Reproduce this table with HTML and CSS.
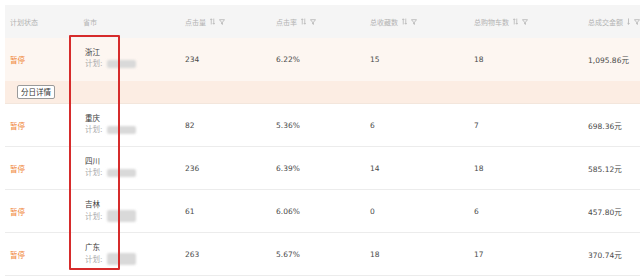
FILE: index.html
```html
<!DOCTYPE html>
<html lang="zh">
<head>
<meta charset="utf-8">
<link rel="stylesheet" href="styles.css">
</head>
<body>
<div class="wrap">
  <div class="table">
    <div class="row head">
      <div class="cell">计划状态</div>
      <div class="cell">省市</div>
      <div class="cell"><span>点击量</span><svg class="sort" width="5" height="7" viewBox="0 0 6 8"><path d="M1.5 7.5V0.8M0.3 2L1.5 0.8 2.7 2M4.5 0.5V7.2M3.3 6L4.5 7.2 5.7 6"/></svg><svg class="filt" width="6" height="6" viewBox="0 0 7 7"><path d="M0.5 0.8H6.5L4 3.8V6.3L3 5.6V3.8Z"/></svg></div>
      <div class="cell"><span>点击率</span><svg class="sort" width="5" height="7" viewBox="0 0 6 8"><path d="M1.5 7.5V0.8M0.3 2L1.5 0.8 2.7 2M4.5 0.5V7.2M3.3 6L4.5 7.2 5.7 6"/></svg><svg class="filt" width="6" height="6" viewBox="0 0 7 7"><path d="M0.5 0.8H6.5L4 3.8V6.3L3 5.6V3.8Z"/></svg></div>
      <div class="cell"><span>总收藏数</span><svg class="sort" width="5" height="7" viewBox="0 0 6 8"><path d="M1.5 7.5V0.8M0.3 2L1.5 0.8 2.7 2M4.5 0.5V7.2M3.3 6L4.5 7.2 5.7 6"/></svg><svg class="filt" width="6" height="6" viewBox="0 0 7 7"><path d="M0.5 0.8H6.5L4 3.8V6.3L3 5.6V3.8Z"/></svg></div>
      <div class="cell"><span>总购物车数</span><svg class="sort" width="5" height="7" viewBox="0 0 6 8"><path d="M1.5 7.5V0.8M0.3 2L1.5 0.8 2.7 2M4.5 0.5V7.2M3.3 6L4.5 7.2 5.7 6"/></svg><svg class="filt" width="6" height="6" viewBox="0 0 7 7"><path d="M0.5 0.8H6.5L4 3.8V6.3L3 5.6V3.8Z"/></svg></div>
      <div class="cell"><span>总成交金额</span><svg class="sort one" width="3" height="7" viewBox="0 0 3 8"><path d="M1.5 0.5V7.2M0.3 6L1.5 7.2 2.7 6"/></svg><svg class="filt" width="6" height="6" viewBox="0 0 7 7"><path d="M0.5 0.8H6.5L4 3.8V6.3L3 5.6V3.8Z"/></svg></div>
    </div>

    <div class="row data active">
      <div class="cell status">暂停</div>
      <div class="cell city"><span class="name">浙江</span><span class="plan">计划:<i class="redact"></i></span></div>
      <div class="cell">234</div>
      <div class="cell">6.22%</div>
      <div class="cell">15</div>
      <div class="cell">18</div>
      <div class="cell">1,095.86元</div>
    </div>
    <div class="subrow">
      <button class="btn">分日详情</button>
    </div>

    <div class="row data">
      <div class="cell status">暂停</div>
      <div class="cell city"><span class="name">重庆</span><span class="plan">计划:<i class="redact"></i></span></div>
      <div class="cell">82</div>
      <div class="cell">5.36%</div>
      <div class="cell">6</div>
      <div class="cell">7</div>
      <div class="cell">698.36元</div>
    </div>
    <div class="row data">
      <div class="cell status">暂停</div>
      <div class="cell city"><span class="name">四川</span><span class="plan">计划:<i class="redact"></i></span></div>
      <div class="cell">236</div>
      <div class="cell">6.39%</div>
      <div class="cell">14</div>
      <div class="cell">18</div>
      <div class="cell">585.12元</div>
    </div>
    <div class="row data">
      <div class="cell status">暂停</div>
      <div class="cell city"><span class="name">吉林</span><span class="plan">计划:<i class="redact big"></i></span></div>
      <div class="cell">61</div>
      <div class="cell">6.06%</div>
      <div class="cell">0</div>
      <div class="cell">6</div>
      <div class="cell">457.80元</div>
    </div>
    <div class="row data">
      <div class="cell status">暂停</div>
      <div class="cell city"><span class="name">广东</span><span class="plan">计划:<i class="redact big"></i></span></div>
      <div class="cell">263</div>
      <div class="cell">5.67%</div>
      <div class="cell">18</div>
      <div class="cell">17</div>
      <div class="cell">370.74元</div>
    </div>

    <div class="mark"></div>
  </div>
</div>
</body>
</html>
```

FILE: styles.css
```css
html, body {
  margin: 0;
  padding: 0;
  background: #ffffff;
}
body {
  font-family: "DejaVu Sans", "Noto Sans CJK SC", sans-serif;
  font-size: 7.5px;
  color: #4a4a4a;
  overflow: hidden;
  width: 640px;
  height: 280px;
}
.wrap {
  padding: 5px 0 0 5px;
}
.table {
  position: relative;
  width: 660px;
}
.row {
  display: grid;
  grid-template-columns: 75px 100px 91px 94px 104px 114px 1fr;
  align-items: center;
}
.cell {
  padding-left: 5px;
  display: flex;
  align-items: center;
  white-space: nowrap;
}
.head {
  height: 33px;
  background: #f5f5f5;
  color: #b3b3b3;
  font-size: 7px;
}
.head .cell:nth-child(2) {
  padding-left: 3px;
}
.sort,
.filt {
  flex: 0 0 auto;
  display: block;
  margin-left: 4px;
  fill: none;
  stroke: #a9a9a9;
  stroke-width: 0.8;
}
.data {
  height: 42px;
  border-bottom: 1px solid #ececec;
}
.data.active {
  background: #fdf6f1;
  border-bottom: none;
  height: 43px;
}
.status {
  color: #f0863a;
}
.city {
  flex-direction: column;
  align-items: flex-start;
  align-self: start;
  padding-top: 9px;
  line-height: 11px;
}
.name {
  color: #3a3a3a;
}
.plan {
  display: flex;
  align-items: center;
  color: #ababab;
}
.redact {
  display: inline-block;
  width: 29px;
  height: 8px;
  margin-left: 4px;
  background: #d9d9d9;
  border-radius: 2px;
  filter: blur(0.8px);
}
.redact.big {
  height: 12px;
}
.subrow {
  height: 22px;
  background: #fcede3;
  border-bottom: 1px solid #f3e6dc;
  display: flex;
  align-items: center;
  padding-left: 12px;
}
.btn {
  font-family: "Noto Sans CJK SC", sans-serif;
  font-size: 7.5px;
  color: #333;
  background: #ffffff;
  border: 1px solid #9a9a9a;
  border-radius: 2px;
  height: 14px;
  padding: 0 3px;
  line-height: 12px;
}
.mark {
  position: absolute;
  left: 64px;
  top: 30px;
  width: 47px;
  height: 231px;
  border: 2px solid #d62b2b;
  border-radius: 1px;
}
```
